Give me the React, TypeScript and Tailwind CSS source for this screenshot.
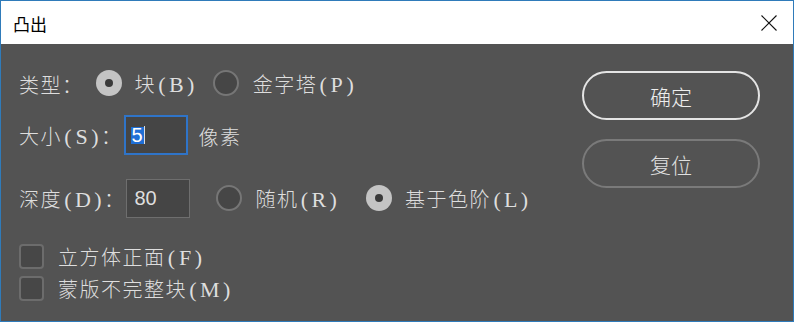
import React from "react";

const CJK = { fontFamily: '"Noto Sans CJK SC", "Noto Sans CJK JP", sans-serif' };

function L({ children }: { children: string }) {
  return (
    <span className="text-[22px] tracking-normal" style={{ fontFamily: '"Liberation Serif", serif' }}>
      {children.split("").map((c, i) =>
        c === "(" || c === ")" ? (
          <span key={i} className="inline-block w-[12px] text-center">
            {c}
          </span>
        ) : (
          <span key={i} className="inline-block min-w-[15px] px-[1px] text-center">
            {c}
          </span>
        )
      )}
    </span>
  );
}

function T({ children, className = "" }: { children: React.ReactNode; className?: string }) {
  return <span className={"pt-[3px] font-light " + className}>{children}</span>;
}

function Radio({ on }: { on?: boolean }) {
  return on ? (
    <div className="flex h-[26px] w-[26px] shrink-0 items-center justify-center rounded-full bg-[#c4c4c4]">
      <div className="h-[8px] w-[8px] rounded-full bg-[#3a3a3a]" />
    </div>
  ) : (
    <div className="h-[26px] w-[26px] shrink-0 rounded-full border-2 border-[#767676] bg-[#464646]" />
  );
}

function Check() {
  return <div className="h-[25px] w-[25px] shrink-0 rounded-[4px] border-2 border-[#6c6c6c] bg-[#474747]" />;
}

export default function App() {
  return (
    <div className="flex h-[322px] w-[794px] flex-col border border-[#2f7bba] bg-[#535353]" style={CJK}>
      <div className="flex h-[43px] shrink-0 items-center justify-between bg-white pl-[12px] pr-[16px]">
        <span className="pt-[3px] text-[17px] text-black">凸出</span>
        <svg width="16" height="16" viewBox="0 0 16 16" className="mt-[1px]">
          <path d="M0.5 0.5 L15.5 15.5 M15.5 0.5 L0.5 15.5" stroke="#111" strokeWidth="1.1" />
        </svg>
      </div>
      <div className="flex flex-1 text-[20px] leading-none tracking-[1.5px] text-[#dedede]">
        <div className="flex flex-1 flex-col pl-[18px] pt-[19px]">
          <div className="flex h-[40px] items-center">
            <T>类型：</T>
            <div className="ml-[12px]"><Radio on /></div>
            <T className="ml-[13px]">块<L>(B)</L></T>
            <div className="ml-[16px]"><Radio /></div>
            <T className="ml-[14px]">金字塔<L>(P)</L></T>
          </div>
          <div className="mt-[12px] flex h-[40px] items-center">
            <T>大小<L>(S)</L>：</T>
            <div className="ml-[1px] flex h-[40px] w-[64px] items-center border-2 border-[#2f74c8] bg-[#454545] pl-[5px]" style={{ fontFamily: '"Liberation Sans", sans-serif' }}>
              <span className="bg-[#1f6fd6] px-[1px] text-[20px] leading-[17px] tracking-normal text-white">5</span>
              <span className="h-[18px] w-[1px] bg-[#dedede]" />
            </div>
            <T className="ml-[11px]">像素</T>
          </div>
          <div className="mt-[23px] flex h-[40px] items-center">
            <T>深度<L>(D)</L>：</T>
            <div className="ml-[1px] flex h-[39px] w-[64px] items-center border border-[#6e6e6e] bg-[#454545] pl-[7px] text-[20px] tracking-normal" style={{ fontFamily: '"Liberation Sans", sans-serif' }}>
              80
            </div>
            <div className="ml-[26px]"><Radio /></div>
            <T className="ml-[13px]">随机<L>(R)</L></T>
            <div className="ml-[27px]"><Radio on /></div>
            <T className="ml-[13px]">基于色阶<L>(L)</L></T>
          </div>
          <div className="mt-[25px] flex h-[26px] items-center">
            <Check />
            <T className="ml-[14px]">立方体正面<L>(F)</L></T>
          </div>
          <div className="mt-[6px] flex h-[26px] items-center">
            <Check />
            <T className="ml-[14px]">蒙版不完整块<L>(M)</L></T>
          </div>
        </div>
        <div className="mr-[33px] flex w-[178px] flex-col gap-[19px] pt-[27px] tracking-normal">
          <div className="flex h-[49px] items-center justify-center rounded-full border-2 border-[#e4e4e4] pt-[2px] text-[21px] font-light text-[#eeeeee]">确定</div>
          <div className="flex h-[49px] items-center justify-center rounded-full border-2 border-[#7a7a7a] pt-[2px] text-[21px] font-light text-[#e0e0e0]">复位</div>
        </div>
      </div>
    </div>
  );
}
